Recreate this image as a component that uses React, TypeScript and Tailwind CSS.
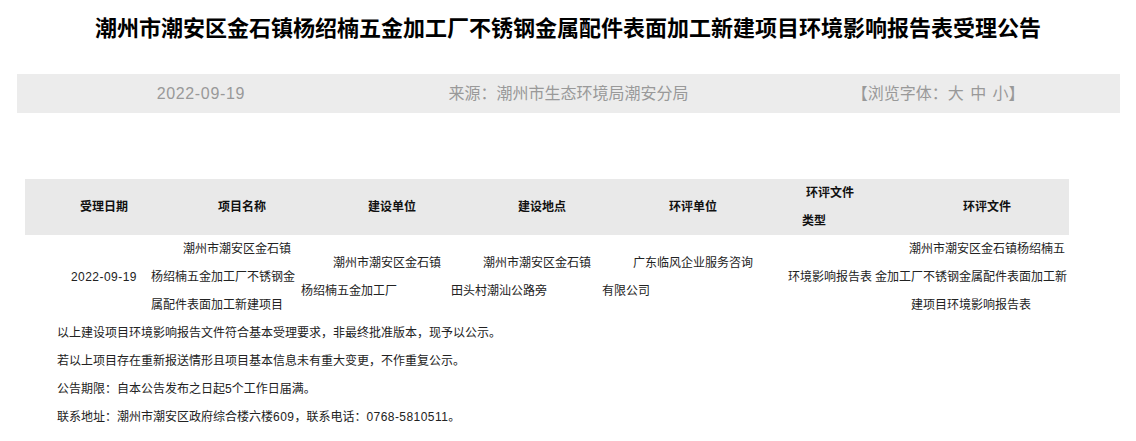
import React from "react";

const COLS = "grid grid-cols-[120px_152px_150px_150px_186px_90px_196px]";

const NOTES = [
  "以上建设项目环境影响报告文件符合基本受理要求，非最终批准版本，现予以公示。",
  "若以上项目存在重新报送情形且项目基本信息未有重大变更，不作重复公示。",
  "公告期限：自本公告发布之日起5个工作日届满。",
];

export default function App() {
  return (
    <div className="w-[1136px] min-h-[441px] bg-white font-['Liberation_Sans','Noto_Sans_CJK_SC',sans-serif] text-[#222]">
      {/* Title */}
      <h1 className="pt-[14px] text-center text-[22px] leading-[30px] font-bold text-black">
        潮州市潮安区金石镇杨绍楠五金加工厂不锈钢金属配件表面加工新建项目环境影响报告表受理公告
      </h1>

      {/* Info bar */}
      <div className="mt-[30px] ml-[17px] w-[1103px] h-[39px] bg-[#ececec] grid grid-cols-3 items-center text-[16px] text-[#999]">
        <div className="text-center tracking-[0.65px]">2022-09-19</div>
        <div className="text-center">来源：潮州市生态环境局潮安分局</div>
        <div className="text-center pl-[4px] [word-spacing:2px]">【浏览字体：大 中 小】</div>
      </div>

      {/* Table */}
      <div className="mt-[66px] ml-[25px] w-[1044px] text-[12px]">
        <div className={`${COLS} h-[56px] bg-[#e9e9e9] items-center font-bold leading-[28px] text-[#111] whitespace-nowrap`}>
          <div className="pl-[55px]">受理日期</div>
          <div className="pl-[73px]">项目名称</div>
          <div className="pl-[71px]">建设单位</div>
          <div className="pl-[71px]">建设地点</div>
          <div className="pl-[72px]">环评单位</div>
          <div>
            <div className="pl-[23px]">环评文件</div>
            <div className="pl-[19px]">类型</div>
          </div>
          <div className="pl-[90px]">环评文件</div>
        </div>

        <div className={`${COLS} h-[84px] items-center leading-[28px] whitespace-nowrap`}>
          <div className="pl-[46px] tracking-[0.45px]">2022-09-19</div>
          <div>
            <div className="pl-[38px]">潮州市潮安区金石镇</div>
            <div className="pl-[6px]">杨绍楠五金加工厂不锈钢金</div>
            <div className="pl-[6px]">属配件表面加工新建项目</div>
          </div>
          <div>
            <div className="pl-[36px]">潮州市潮安区金石镇</div>
            <div className="pl-[4px]">杨绍楠五金加工厂</div>
          </div>
          <div>
            <div className="pl-[36px]">潮州市潮安区金石镇</div>
            <div className="pl-[4px]">田头村潮汕公路旁</div>
          </div>
          <div>
            <div className="pl-[36px]">广东临风企业服务咨询</div>
            <div className="pl-[5px]">有限公司</div>
          </div>
          <div className="pl-[5px]">环境影响报告表</div>
          <div>
            <div className="pl-[36px]">潮州市潮安区金石镇杨绍楠五</div>
            <div className="pl-[2px]">金加工厂不锈钢金属配件表面加工新</div>
            <div className="pl-[38px]">建项目环境影响报告表</div>
          </div>
        </div>

        {/* Notes */}
        <div className="pl-[32px] leading-[28px] whitespace-nowrap">
          {NOTES.map((n) => (
            <p key={n}>{n}</p>
          ))}
          <p>
            联系地址：潮州市潮安区政府综合楼六楼<span className="tracking-[0.45px]">609</span>，联系电话：
            <span className="tracking-[0.45px]">0768-5810511</span>。
          </p>
        </div>
      </div>
    </div>
  );
}
